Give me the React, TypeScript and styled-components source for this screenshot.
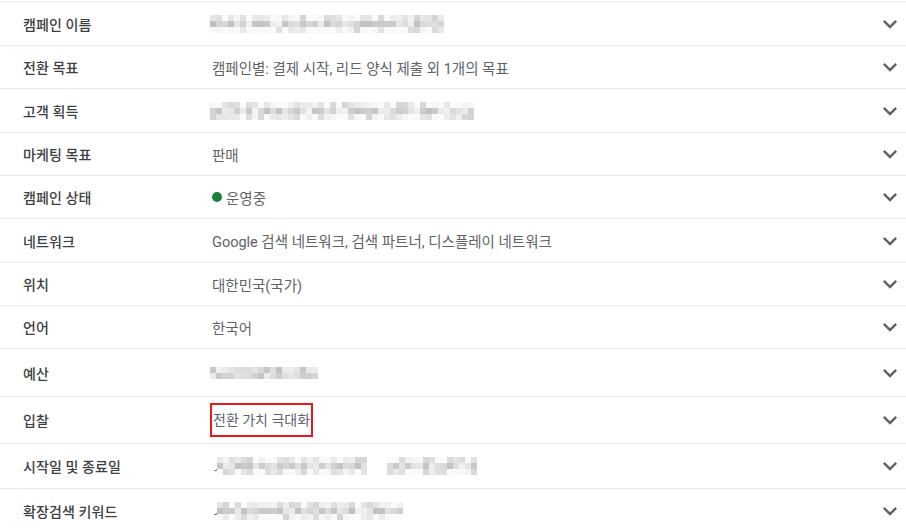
import React from "react";
import styled, { createGlobalStyle } from "styled-components";

const GlobalStyle = createGlobalStyle`
  body {
    margin: 0;
    background: #ffffff;
    font-family: Roboto, "Noto Sans CJK KR", "Noto Sans", sans-serif;
  }
`;

const Panel = styled.div`
  width: 906px;
  padding-top: 1px;
  background: #ffffff;
`;

const List = styled.div`
  border-top: 1px solid #ebebeb;
`;

const Row = styled.div<{ h: number }>`
  display: grid;
  grid-template-columns: 210px 1fr 30px;
  align-items: center;
  height: ${(p) => p.h}px;
  border-bottom: 1px solid #ebebeb;
  box-sizing: border-box;
`;

const Label = styled.div`
  padding-left: 23px;
  font-size: 14px;
  font-weight: 500;
  color: #3c4043;
  letter-spacing: 0.1px;
`;

const Value = styled.div`
  display: flex;
  align-items: center;
  font-size: 14.5px;
  color: #5f6368;
`;

const Plain = styled.span`
  padding-left: 2px;
`;

const Dot = styled.span`
  width: 10px;
  height: 10px;
  margin: 0 4px 0 2px;
  border-radius: 50%;
  background: #188038;
`;

const Highlight = styled.span`
  padding: 6px 1px 6px 1px;
  border: 2px solid #e8191b;
  line-height: 18px;
  font-size: 14px;
`;

const Lead = styled.span`
  padding-left: 2px;
  color: #5f6368;
`;

const Mosaic = styled.span<{ gap?: number; overlap?: number }>`
  display: inline-flex;
  flex-direction: column;
  margin-right: ${(p) => p.gap ?? 0}px;
  margin-left: ${(p) => -(p.overlap ?? 0)}px;
`;

const MosaicLine = styled.span`
  display: flex;
`;

const Cell = styled.span<{ shade: number }>`
  width: 6px;
  height: 6px;
  background: rgb(${(p) => p.shade}, ${(p) => p.shade}, ${(p) => p.shade});
`;

const Chevron = styled.div`
  display: flex;
  color: #5f6368;
`;

function shades(seed: number, count: number) {
  let s = seed;
  const out: number[] = [];
  for (let i = 0; i < count; i++) {
    s = (s * 9301 + 49297) % 233280;
    const r = s / 233280;
    out.push(Math.round(192 + r * 52));
  }
  return out;
}

type BlurProps = { width: number; lines?: number; seed: number; gap?: number; overlap?: number };

const Blur = ({ width, lines = 3, seed, gap, overlap }: BlurProps) => {
  const cols = Math.round(width / 6);
  return (
    <Mosaic gap={gap} overlap={overlap}>
      {Array.from({ length: lines }).map((_, li) => {
        const row = shades(seed + li * 17, cols);
        return (
          <MosaicLine key={li}>
            {row.map((c, i) => {
              // outer rows are lighter, the middle row carries the ink
              const v = li === 1 || lines === 2 ? c : Math.min(250, c + 20);
              return <Cell key={i} shade={v} />;
            })}
          </MosaicLine>
        );
      })}
    </Mosaic>
  );
};

const ExpandIcon = () => (
  <svg width="28" height="28" viewBox="0 0 24 24" fill="currentColor">
    <path d="M16.59 8.59L12 13.17 7.41 8.59 6 10l6 6 6-6z" />
  </svg>
);

type Item = { label: string; h: number; value: React.ReactNode };

const items: Item[] = [
  { label: "캠페인 이름", h: 44, value: <Blur width={234} seed={3} /> },
  { label: "전환 목표", h: 43, value: <Plain>캠페인별: 결제 시작, 리드 양식 제출 외 1개의 목표</Plain> },
  { label: "고객 획득", h: 44, value: <Blur width={264} seed={11} /> },
  { label: "마케팅 목표", h: 43, value: <Plain>판매</Plain> },
  {
    label: "캠페인 상태",
    h: 43,
    value: (
      <>
        <Dot />
        운영중
      </>
    ),
  },
  { label: "네트워크", h: 44, value: <Plain>Google 검색 네트워크, 검색 파트너, 디스플레이 네트워크</Plain> },
  { label: "위치", h: 43, value: <Plain>대한민국(국가)</Plain> },
  { label: "언어", h: 43, value: <Plain>한국어</Plain> },
  { label: "예산", h: 48, value: <Blur width={108} lines={2} seed={23} /> },
  { label: "입찰", h: 47, value: <Highlight>전환 가치 극대화</Highlight> },
  {
    label: "시작일 및 종료일",
    h: 45,
    value: (
      <>
        <Lead>ㅅ</Lead>
        <Blur width={150} seed={31} gap={20} overlap={8} />
        <Blur width={90} seed={41} />
      </>
    ),
  },
  {
    label: "확장검색 키워드",
    h: 44,
    value: (
      <>
        <Lead>ㅅ</Lead>
        <Blur width={188} seed={53} overlap={8} />
      </>
    ),
  },
];

export default function App() {
  return (
    <>
      <GlobalStyle />
      <Panel>
        <List>
          {items.map((it) => (
            <Row key={it.label} h={it.h}>
              <Label>{it.label}</Label>
              <Value>{it.value}</Value>
              <Chevron>
                <ExpandIcon />
              </Chevron>
            </Row>
          ))}
        </List>
      </Panel>
    </>
  );
}
